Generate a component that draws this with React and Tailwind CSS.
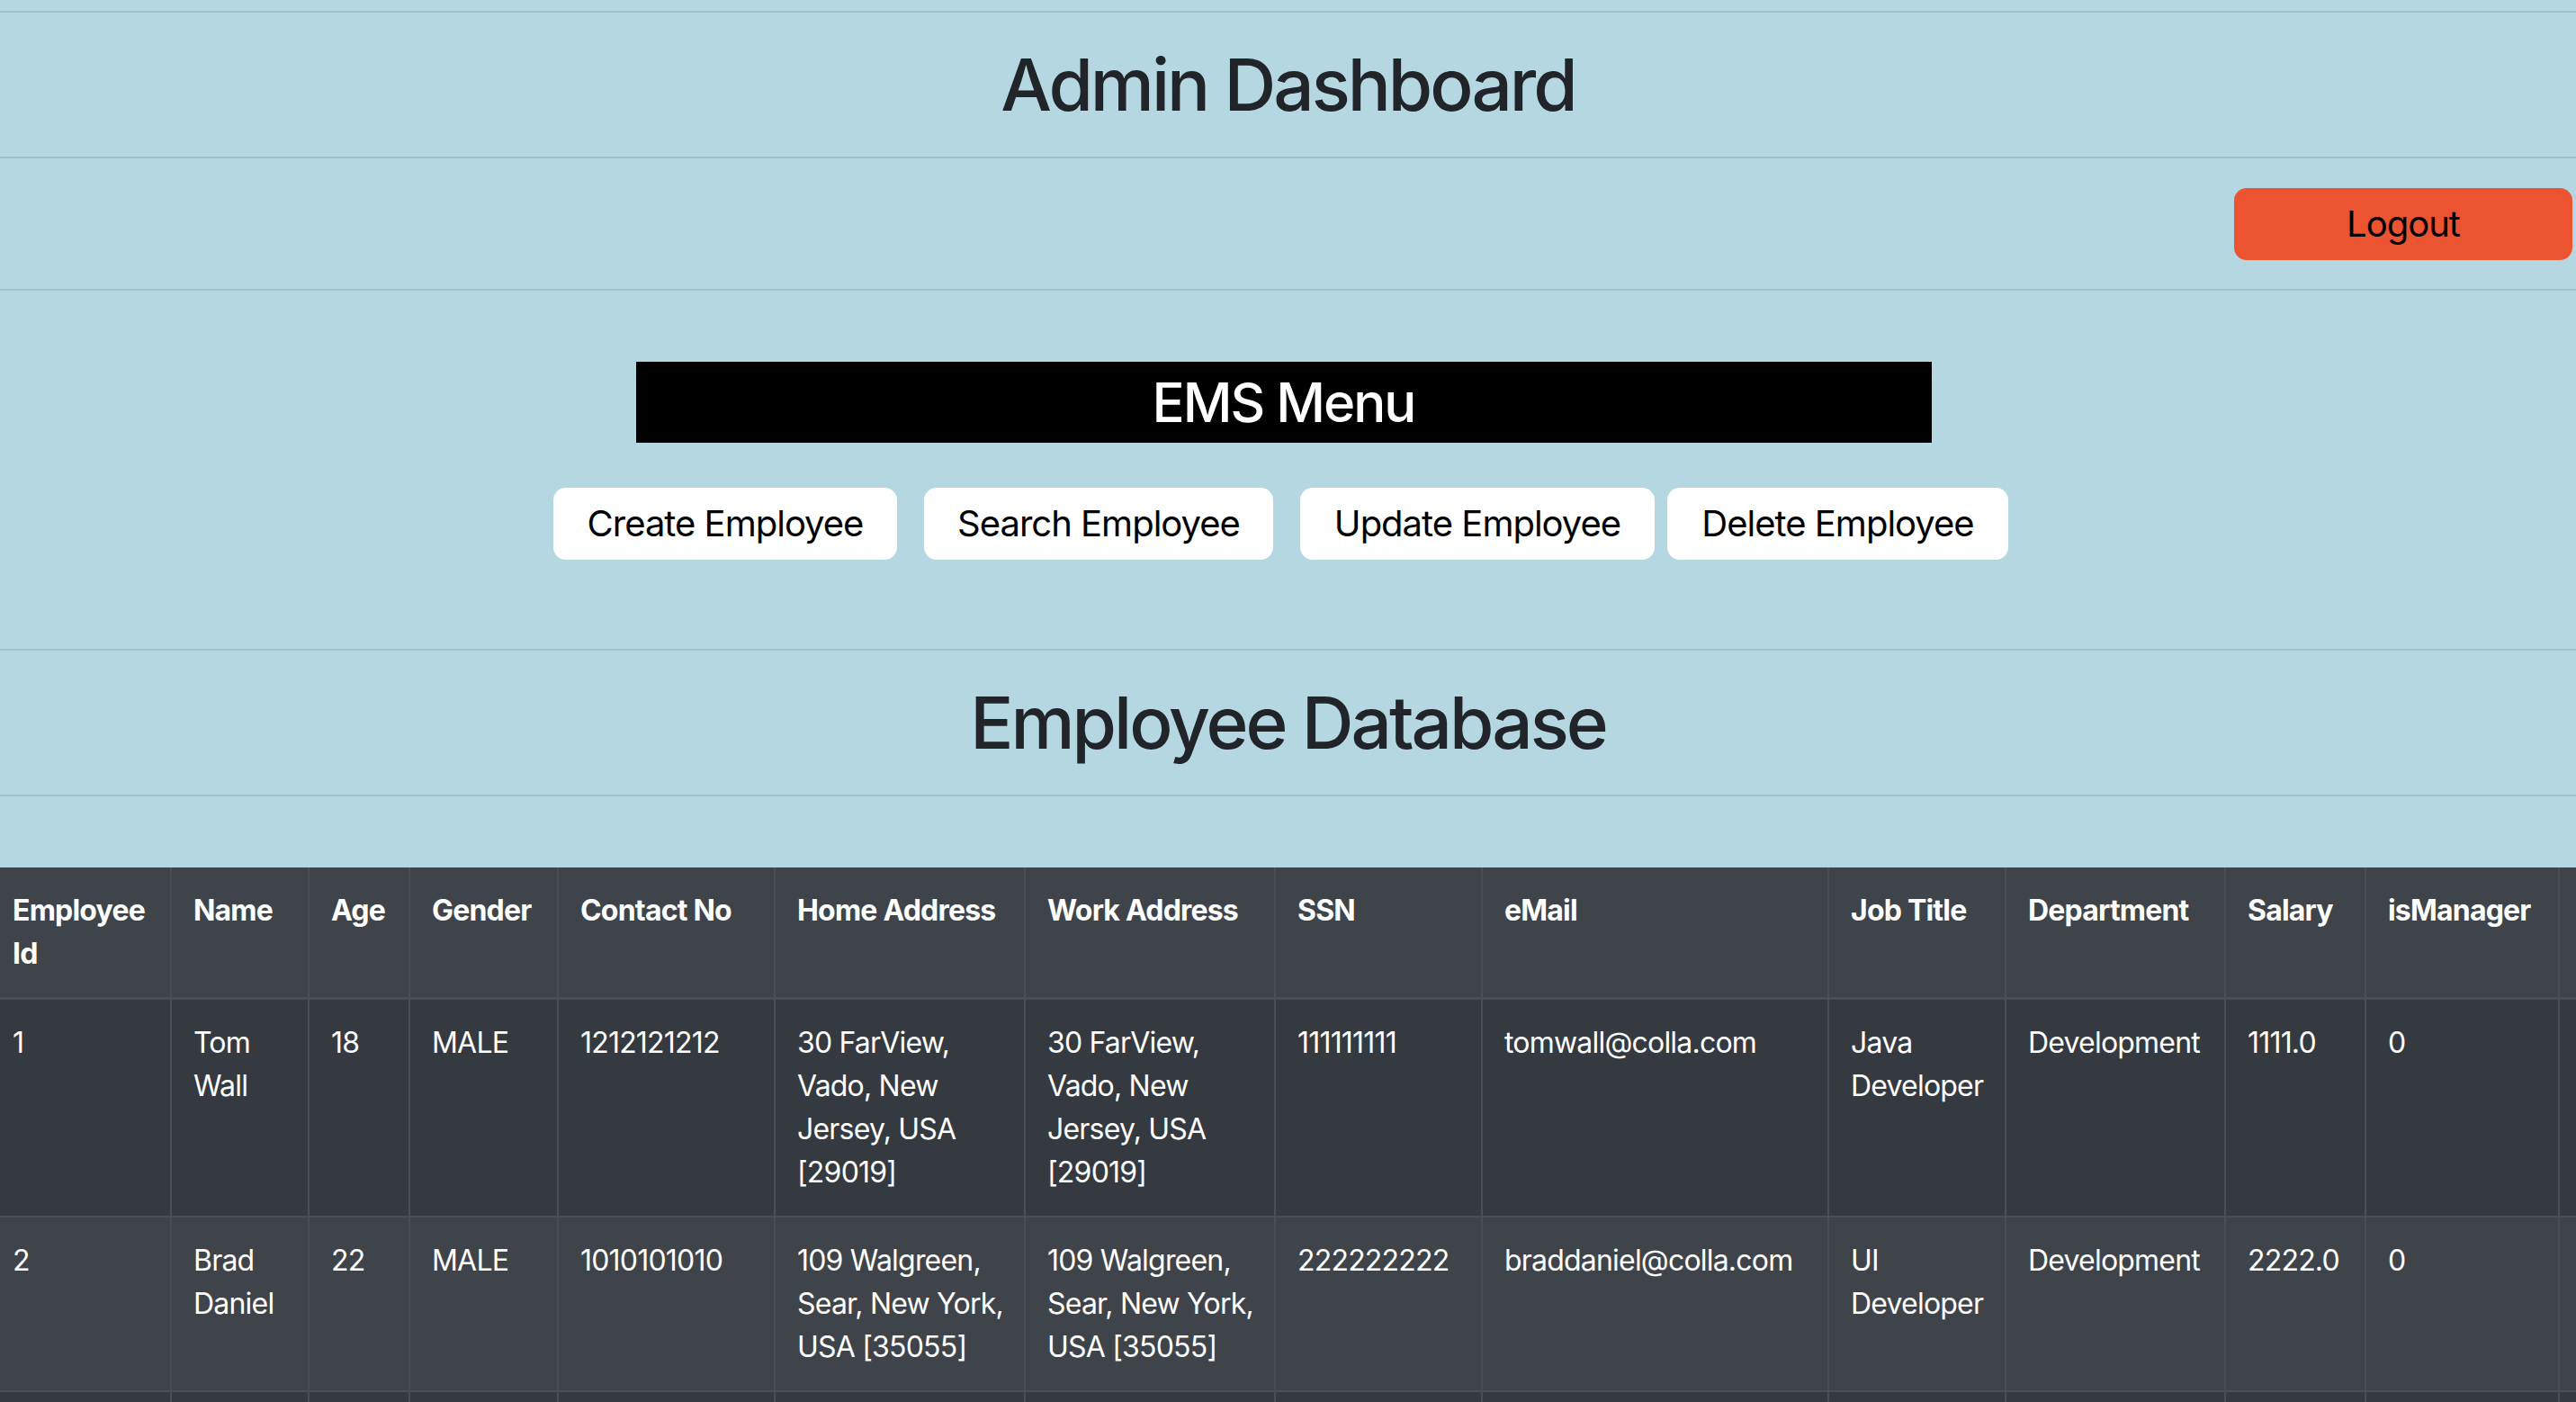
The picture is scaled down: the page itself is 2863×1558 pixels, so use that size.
import React from 'react';

const columns = [
  { label: 'Employee Id', width: 'w-[190px]' },
  { label: 'Name', width: 'w-[153px]' },
  { label: 'Age', width: 'w-[112px]' },
  { label: 'Gender', width: 'w-[165px]' },
  { label: 'Contact No', width: 'w-[241px]' },
  { label: 'Home Address', width: 'w-[278px]' },
  { label: 'Work Address', width: 'w-[278px]' },
  { label: 'SSN', width: 'w-[230px]' },
  { label: 'eMail', width: 'w-[385px]' },
  { label: 'Job Title', width: 'w-[197px]' },
  { label: 'Department', width: 'w-[244px]' },
  { label: 'Salary', width: 'w-[156px]' },
  { label: 'isManager', width: 'w-[215px]' },
  { label: '', width: 'w-[200px]' },
];

// non-breaking spaces keep "Sear, New York," on one line like the original
const employees = [
  ['1', 'Tom Wall', '18', 'MALE', '1212121212', '30 FarView, Vado, New Jersey, USA [29019]', '30 FarView, Vado, New Jersey, USA [29019]', '111111111', 'tomwall@colla.com', 'Java Developer', 'Development', '1111.0', '0', ''],
  ['2', 'Brad Daniel', '22', 'MALE', '1010101010', '109 Walgreen, Sear,\u00a0New\u00a0York, USA [35055]', '109 Walgreen, Sear,\u00a0New\u00a0York, USA [35055]', '222222222', 'braddaniel@colla.com', 'UI Developer', 'Development', '2222.0', '0', ''],
];

const menuButtons = [
  { label: 'Create Employee', className: 'w-[382px]' },
  { label: 'Search Employee', className: 'w-[388px] ml-[30px]' },
  { label: 'Update Employee', className: 'w-[394px] ml-[30px]' },
  { label: 'Delete Employee', className: 'w-[379px] ml-[14px]' },
];

const Rule = () => <hr className="h-0 border-0 border-t-2 border-[#9fbfcb]" />;

const cellPad = (i) => (i === 0 ? 'border-l-0 pl-[14px]' : 'pl-[24px]');

const App = () => {
  return (
    <div className="h-screen w-full overflow-hidden bg-[#b4d7e2] pt-[12px] font-[Inter,sans-serif] text-[#212529]">
      <Rule />
      {/* Page title */}
      <div className="flex h-[160px] items-center justify-center">
        <h1 className="text-[80px] font-medium leading-none tracking-[-3px]">Admin Dashboard</h1>
      </div>
      <Rule />

      {/* Logout bar */}
      <div className="flex h-[145px] items-center justify-end pr-[4px]">
        <button className="h-[80px] w-[376px] rounded-[14px] bg-[#ec5331] text-[40px] text-black tracking-[-1px]">
          Logout
        </button>
      </div>
      <Rule />

      {/* EMS menu */}
      <div className="flex h-[398px] flex-col items-center pt-[79px]">
        <div className="mr-[10px] flex h-[90px] w-[1440px] items-center justify-center bg-black">
          <h2 className="text-[60px] font-medium leading-none text-white tracking-[-2px]">EMS Menu</h2>
        </div>
        <div className="mt-[50px] flex pr-[16px]">
          {menuButtons.map((btn) => (
            <button
              key={btn.label}
              className={`h-[80px] rounded-[14px] bg-white text-[40px] text-black tracking-[-1px] ${btn.className}`}
            >
              {btn.label}
            </button>
          ))}
        </div>
      </div>
      <Rule />

      {/* Table title */}
      <div className="flex h-[160px] items-center justify-center">
        <h2 className="text-[80px] font-medium leading-none tracking-[-3px]">Employee Database</h2>
      </div>
      <Rule />

      <div className="mt-[79px] overflow-hidden">
        <table className="w-[3044px] table-fixed border-collapse text-[32px] leading-[48px] text-white tracking-[-0.8px]">
          <tbody>
            <tr className="bg-[#3e444a]">
              {columns.map((col, i) => (
                <th
                  key={i}
                  className={`${col.width} border-2 border-t-0 border-b-[3px] border-[#4a4f57] py-[24px] pr-[24px] text-left align-top font-bold ${cellPad(i)}`}
                >
                  {col.label}
                </th>
              ))}
            </tr>
            {employees.map((emp, r) => (
              <tr key={emp[0]} className={r % 2 === 0 ? 'bg-[#343a40]' : 'bg-[#3e444a]'}>
                {emp.map((val, i) => (
                  <td
                    key={i}
                    className={`border-2 border-[#4a4f57] py-[24px] pr-[24px] align-top ${cellPad(i)}`}
                  >
                    {val}
                  </td>
                ))}
              </tr>
            ))}
            <tr className="bg-[#343a40]">
              {columns.map((col, i) => (
                <td key={i} className={`h-[144px] border-2 border-[#4a4f57] ${cellPad(i)}`} />
              ))}
            </tr>
          </tbody>
        </table>
      </div>
    </div>
  );
};

export default App;
